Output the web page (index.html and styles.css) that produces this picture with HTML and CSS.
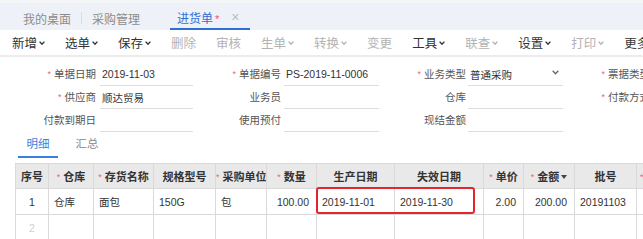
FILE: index.html
```html
<!DOCTYPE html>
<html lang="zh-CN">
<head>
<meta charset="utf-8">
<title>进货单</title>
<link rel="stylesheet" href="styles.css">
</head>
<body>
<div class="page">
  <div class="tabbar">
    <div class="tab">我的桌面</div>
    <div class="tab-sep"></div>
    <div class="tab">采购管理</div>
    <div class="tab tab-active">进货单<span class="tab-star">*</span><span class="tab-close">×</span></div>
  </div>

  <div class="toolbar">
    <div class="tb-item">新增<svg class="chev" viewBox="0 0 6 4"><path d="M0.6 0.6 L3 3.2 L5.4 0.6"/></svg></div>
    <div class="tb-item">选单<svg class="chev" viewBox="0 0 6 4"><path d="M0.6 0.6 L3 3.2 L5.4 0.6"/></svg></div>
    <div class="tb-item">保存<svg class="chev" viewBox="0 0 6 4"><path d="M0.6 0.6 L3 3.2 L5.4 0.6"/></svg></div>
    <div class="tb-item is-off">删除</div>
    <div class="tb-sep"></div>
    <div class="tb-item is-off">审核</div>
    <div class="tb-sep"></div>
    <div class="tb-item is-off">生单<svg class="chev" viewBox="0 0 6 4"><path d="M0.6 0.6 L3 3.2 L5.4 0.6"/></svg></div>
    <div class="tb-item is-off">转换<svg class="chev" viewBox="0 0 6 4"><path d="M0.6 0.6 L3 3.2 L5.4 0.6"/></svg></div>
    <div class="tb-sep"></div>
    <div class="tb-item is-off">变更</div>
    <div class="tb-sep"></div>
    <div class="tb-item">工具<svg class="chev" viewBox="0 0 6 4"><path d="M0.6 0.6 L3 3.2 L5.4 0.6"/></svg></div>
    <div class="tb-item is-off">联查<svg class="chev" viewBox="0 0 6 4"><path d="M0.6 0.6 L3 3.2 L5.4 0.6"/></svg></div>
    <div class="tb-item">设置<svg class="chev" viewBox="0 0 6 4"><path d="M0.6 0.6 L3 3.2 L5.4 0.6"/></svg></div>
    <div class="tb-sep"></div>
    <div class="tb-item is-off">打印<svg class="chev" viewBox="0 0 6 4"><path d="M0.6 0.6 L3 3.2 L5.4 0.6"/></svg></div>
    <div class="tb-item">更多</div>
  </div>

  <div class="form">
    <div class="form-row">
      <div class="field f1"><span class="lbl"><span class="req">*</span>单据日期</span><span class="inp">2019-11-03</span></div>
      <div class="field f2"><span class="lbl"><span class="req">*</span>单据编号</span><span class="inp">PS-2019-11-0006</span></div>
      <div class="field f3"><span class="lbl"><span class="req">*</span>业务类型</span><span class="inp inp-select">普通采购<svg class="sel-chev" viewBox="0 0 7 5"><path d="M0.7 0.7 L3.5 3.8 L6.3 0.7"/></svg></span></div>
      <div class="field f4"><span class="lbl"><span class="req">*</span>票据类型</span></div>
    </div>
    <div class="form-row">
      <div class="field f1"><span class="lbl"><span class="req">*</span>供应商</span><span class="inp">顺达贸易</span></div>
      <div class="field f2"><span class="lbl">业务员</span><span class="inp"></span></div>
      <div class="field f3"><span class="lbl">仓库</span><span class="inp"></span></div>
      <div class="field f4"><span class="lbl"><span class="req">*</span>付款方式</span></div>
    </div>
    <div class="form-row">
      <div class="field f1"><span class="lbl">付款到期日</span><span class="inp"></span></div>
      <div class="field f2"><span class="lbl">使用预付</span><span class="inp"></span></div>
      <div class="field f3"><span class="lbl">现结金额</span><span class="inp"></span></div>
    </div>
  </div>

  <div class="subtabs">
    <div class="st st-active">明细</div>
    <div class="st">汇总</div>
  </div>

  <div class="grid-wrap">
    <table class="grid">
      <colgroup>
        <col class="c-no"><col class="c-wh"><col class="c-name"><col class="c-spec"><col class="c-unit"><col class="c-qty"><col class="c-pd"><col class="c-ed"><col class="c-price"><col class="c-amt"><col class="c-batch"><col class="c-more">
      </colgroup>
      <thead>
        <tr>
          <th>序号</th>
          <th><span class="req">*</span>仓库</th>
          <th><span class="req">*</span>存货名称</th>
          <th>规格型号</th>
          <th><span class="req">*</span>采购单位</th>
          <th><span class="req">*</span>数量</th>
          <th>生产日期</th>
          <th>失效日期</th>
          <th><span class="req">*</span>单价</th>
          <th><span class="req">*</span>金额<span class="sort"></span></th>
          <th>批号</th>
          <th class="th-left"><span class="req">*</span>保质期</th>
        </tr>
      </thead>
      <tbody>
        <tr>
          <td class="ctr">1</td>
          <td>仓库</td>
          <td>面包</td>
          <td>150G</td>
          <td>包</td>
          <td class="num">100.00</td>
          <td>2019-11-01</td>
          <td>2019-11-30</td>
          <td class="num">2.00</td>
          <td class="num">200.00</td>
          <td>20191103</td>
          <td></td>
        </tr>
        <tr>
          <td class="ctr muted">2</td>
          <td></td><td></td><td></td><td></td><td></td><td></td><td></td><td></td><td></td><td></td><td></td>
        </tr>
      </tbody>
    </table>
    <div class="mark"></div>
  </div>
</div>
</body>
</html>
```

FILE: styles.css
```css
* { box-sizing: border-box; margin: 0; padding: 0; }
html, body { width: 643px; height: 239px; overflow: hidden; background: #fff; }
body {
  font-family: "Liberation Sans", "Noto Sans CJK SC", sans-serif;
  color: #333;
}
.page { width: 643px; height: 239px; overflow: hidden; }

/* top tab bar */
.tabbar {
  height: 30px;
  background: #eef2f8;
  border-top: 3px solid #f5f6f8;
  display: flex;
  align-items: stretch;
  padding-left: 13px;
}
.tab {
  display: flex;
  align-items: center;
  padding: 3px 10px 0;
  font-size: 12px;
  color: #8c8c8c;
  white-space: nowrap;
}
.tab-sep {
  width: 1px;
  height: 12px;
  background: #dadde3;
  align-self: center;
  margin-top: 3px;
}
.tab-active {
  margin-left: 20px;
  padding: 3px 10px 0 7px;
  color: #2f6fd8;
  border-bottom: 2px solid #2f6fd8;
}
.tab-star {
  color: #f0506e;
  font-size: 11px;
  margin-left: 2px;
  align-self: flex-start;
  margin-top: 7px;
}
.tab-close {
  color: #b9bcc2;
  font-size: 14px;
  margin-left: 12px;
}

/* toolbar */
.toolbar {
  height: 27px;
  display: flex;
  align-items: center;
  padding-left: 2px;
  font-size: 12.5px;
  border-bottom: 2px solid #ececec;
  white-space: nowrap;
}
.tb-item {
  display: flex;
  align-items: center;
  padding: 0 10px;
  color: #333;
}
.tb-item.is-off { color: #b3b3b3; }
.chev {
  width: 6px;
  height: 4px;
  margin-left: 2px;
  fill: none;
  stroke: currentColor;
  stroke-width: 1.4;
}
.tb-sep {
  width: 1px;
  height: 12px;
  background: #e2e2e2;
}

/* form */
.form { padding-top: 6px; }
.form-row { display: flex; height: 23px; }
.field { display: flex; align-items: stretch; }
.lbl {
  text-align: right;
  font-size: 10.5px;
  line-height: 22px;
  color: #555;
  white-space: nowrap;
}
.req {
  color: #f0656a;
  font-size: 9px;
  margin-right: 3px;
  font-weight: normal;
  vertical-align: 1px;
}
.inp {
  display: flex;
  align-items: center;
  height: 23px;
  border-bottom: 1px solid #dedede;
  font-size: 10.5px;
  padding-left: 2px;
  color: #333;
  white-space: nowrap;
}
.f1 .lbl { width: 96px; }
.f1 .inp { width: 93px; margin-left: 4px; }
.f2 .lbl { width: 88px; }
.f2 .inp { width: 95px; margin-left: 3px; }
.f3 .lbl { width: 87px; }
.f3 .inp { width: 95px; margin-left: 2px; }
.f4 .lbl { width: 87px; }
.inp-select { justify-content: space-between; padding-right: 4px; }
.sel-chev {
  width: 7px;
  height: 5px;
  fill: none;
  stroke: #666;
  stroke-width: 1.3;
  margin-top: -3px;
}

/* sub tabs */
.subtabs {
  display: flex;
  padding-left: 18px;
  gap: 9px;
}
.st {
  padding: 0 8.5px;
  font-size: 11.5px;
  line-height: 24px;
  color: #888;
  border-bottom: 2px solid transparent;
}
.st-active { color: #3b7fe0; border-bottom-color: #3b7fe0; }

/* grid */
.grid-wrap {
  position: relative;
  margin: 5px 0 0 15px;
}
.grid {
  border-collapse: collapse;
  table-layout: fixed;
  width: 681px;
  font-size: 10.5px;
}
.grid th, .grid td {
  border: 1px solid #d9d9d9;
  white-space: nowrap;
  overflow: hidden;
}
.grid th {
  height: 25px;
  background: #e9e9e9;
  font-weight: bold;
  color: #333;
  text-align: center;
  font-size: 11px;
}
.grid th.th-left { text-align: left; padding-left: 3px; }
.grid td {
  height: 26px;
  padding: 0 7px 0 5px;
  color: #333;
}
.grid td.ctr { text-align: center; padding: 0; }
.grid td.num { text-align: right; }
.grid td.muted { color: #cfcfcf; }
.sort {
  display: inline-block;
  width: 0;
  height: 0;
  border-left: 3px solid transparent;
  border-right: 3px solid transparent;
  border-top: 4px solid #444;
  margin-left: 2px;
  vertical-align: 2px;
}
.c-no { width: 33px; }
.c-wh { width: 45px; }
.c-name { width: 60px; }
.c-spec { width: 62px; }
.c-unit { width: 51px; }
.c-qty { width: 50px; }
.c-pd { width: 78px; }
.c-ed { width: 89px; }
.c-price { width: 40px; }
.c-amt { width: 51px; }
.c-batch { width: 62px; }
.c-more { width: 60px; }

/* red annotation box */
.mark {
  position: absolute;
  left: 301px;
  top: 24px;
  width: 159px;
  height: 27px;
  border: 2px solid #e3262d;
  border-radius: 3px;
  pointer-events: none;
}
```
